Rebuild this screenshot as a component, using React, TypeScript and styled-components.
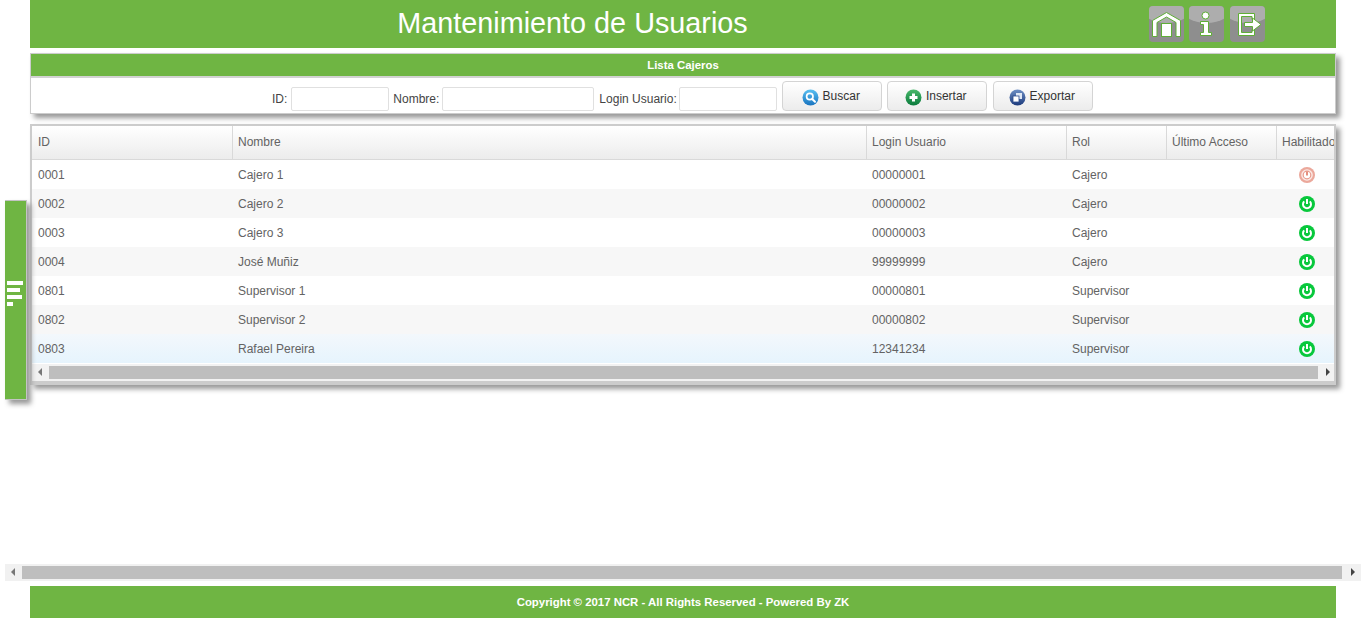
import React from 'react';
import styled, {createGlobalStyle} from 'styled-components';

const GREEN = '#6fb543';

const GlobalStyle = createGlobalStyle`
  html, body {
    margin: 0;
    padding: 0;
    background: #fff;
    overflow: hidden;
  }
  * {
    box-sizing: border-box;
  }
`;

const Page = styled.div`
  position: relative;
  width: 1366px;
  height: 618px;
  display: flex;
  flex-direction: column;
  font-family: 'Liberation Sans', Arial, sans-serif;
  font-size: 12px;
  color: #636363;
`;

const Content = styled.main`
  flex: 1;
  padding: 0 30px;
`;

const Header = styled.header`
  height: 48px;
  background: ${GREEN};
  display: flex;
  align-items: center;
`;

const Title = styled.h1`
  width: 1085px;
  margin: 0 0 2px;
  font-size: 28.8px;
  font-weight: normal;
  text-align: center;
  color: #fff;
`;

const HeaderTools = styled.div`
  display: flex;
  margin-left: 34px;
`;

const ToolButton = styled.a<{$gap?: number}>`
  width: 35px;
  height: 36px;
  margin-left: ${props => props.$gap || 0}px;
  border-radius: 4px;
  background: #8e8e8e;
  position: relative;
  overflow: hidden;
  display: block;

  &::before {
    content: '';
    position: absolute;
    left: -8px;
    right: -8px;
    top: -14px;
    height: 31px;
    border-radius: 50%;
    background: #adadad;
  }

  svg {
    position: absolute;
    left: 0;
    top: 0;
  }
`;

const Panel = styled.section`
  margin-top: 5px;
  height: 61px;
  border: 1px solid #ccc;
  box-shadow: 4px 4px 5px #999;
  background: #fff;
`;

const PanelTitle = styled.div`
  height: 22px;
  background: ${GREEN};
  color: #fff;
  font-size: 11.4px;
  font-weight: bold;
  text-align: center;
  line-height: 22px;
`;

const SearchRow = styled.form`
  height: 37px;
  border-top: 2px solid #d2d2d2;
  margin: 0;
  padding: 3px 0 2px 241px;
  display: flex;
  align-items: flex-end;
`;

const FieldLabel = styled.label<{$before?: number; $after: number}>`
  color: #444;
  margin-left: ${props => props.$before || 0}px;
  margin-right: ${props => props.$after}px;
  line-height: 24px;
`;

const FieldInput = styled.input<{$width: number}>`
  width: ${props => props.$width}px;
  height: 24px;
  border: 1px solid #e0e0e0;
  border-radius: 2px;
  background: #fff;
  padding: 0 4px;
  outline: none;
`;

const ActionButton = styled.button<{$gap: number}>`
  width: 100px;
  height: 30px;
  margin-left: ${props => props.$gap}px;
  border: 1px solid #d4d4d4;
  border-radius: 4px;
  background: linear-gradient(#fff, #ececec);
  color: #333;
  font-family: inherit;
  font-size: 12px;
  display: flex;
  align-items: center;
  justify-content: center;
  gap: 4px;
  padding: 0 2px 1px 0;

  svg {
    flex: none;
    margin-top: 3px;
  }
`;

const GridBox = styled.section`
  margin-top: 10px;
  height: 261px;
  border: 2px solid #ccc;
  border-bottom-width: 4px;
  box-shadow: 4px 4px 5px #999;
  background: #fff;
  overflow: hidden;
`;

const Table = styled.table`
  width: 1304px;
  table-layout: fixed;
  border-collapse: separate;
  border-spacing: 0;
`;

const HeadCell = styled.th`
  height: 34px;
  padding: 0 0 2px 5px;
  font-weight: normal;
  text-align: left;
  white-space: nowrap;
  overflow: hidden;
  color: #636363;
  background: linear-gradient(#fff, #ececec);
  border-right: 1px solid #d9d9d9;
  border-bottom: 1px solid #d9d9d9;

  &:first-child {
    padding-left: 6px;
  }

  &:last-child {
    border-right: 0;
  }
`;

const Row = styled.tr<{$striped?: boolean; $hover?: boolean}>`
  height: 29px;
  background: ${props =>
    props.$hover
      ? 'linear-gradient(#f3f8fc, #e6f4fd)'
      : props.$striped
        ? '#f7f7f7'
        : '#fff'};
`;

const Cell = styled.td`
  padding: 0 0 0 5px;
  white-space: nowrap;
  color: #636363;

  &:first-child {
    padding-left: 6px;
  }
`;

const StatusCell = styled.td`
  padding: 0;
  text-align: center;
  line-height: 0;

  svg {
    margin-left: 1px;
  }
`;

const ScrollBar = styled.div`
  height: 17px;
  background: #f1f1f1;
  display: flex;
  align-items: center;
`;

const InnerScrollBar = styled(ScrollBar)`
  width: 1304px;
  margin-top: 1px;
  background: #f2f2f2;
`;

const PageScrollBar = styled(ScrollBar)`
  margin: 0 5px;
  width: 1356px;
`;

const ScrollArrow = styled.span<{$side: 'left' | 'right'}>`
  flex: none;
  width: 17px;
  height: 17px;
  position: relative;

  &::after {
    content: '';
    position: absolute;
    top: 4px;
    ${props => (props.$side === 'left' ? 'left: 6px;' : 'left: 7px;')}
    border-top: 4px solid transparent;
    border-bottom: 4px solid transparent;
    ${props =>
      props.$side === 'left' ? 'border-right: 4px solid #777;' : 'border-left: 4px solid #444;'}
  }
`;

const ScrollThumb = styled.span<{$endGap: number}>`
  flex: 1;
  height: 13px;
  margin-right: ${props => props.$endGap}px;
  background: #bebebe;
`;

const Footer = styled.footer`
  height: 32px;
  margin: 5px 30px 0;
  background: ${GREEN};
  color: #fff;
  font-size: 11.4px;
  font-weight: bold;
  text-align: center;
  line-height: 32px;
`;

const SideTab = styled.aside`
  position: absolute;
  left: 5px;
  top: 200px;
  width: 22px;
  height: 200px;
  background: ${GREEN};
  border: 1px solid #c4c4c4;
  border-left: 0;
  box-shadow: 4px 4px 5px #999;
  display: flex;
  flex-direction: column;
  justify-content: center;
  gap: 3px;
  padding: 0 0 13px 2px;
`;

const TabBar = styled.span<{$width: number}>`
  display: block;
  height: 4px;
  width: ${props => props.$width}px;
  background: #fff;
`;

function HomeIcon() {
  return (
    <svg width="35" height="36" viewBox="0 0 35 36" fill="none">
      <path
        d="M3.5 14.5 L17.5 6.5 L31.5 14.5 V30.5 H27 V16.5 L17.5 11 L8 16.5 V30.5 H3.5 Z"
        fill="#fff"
        stroke="#5fae37"
        strokeWidth="1"
      />
      <rect x="12.5" y="17.5" width="10" height="13" fill="#fff" stroke="#5fae37" />
    </svg>
  );
}

function InfoIcon() {
  return (
    <svg width="35" height="36" viewBox="0 0 35 36" fill="none">
      <circle cx="16.5" cy="9.5" r="3.5" fill="#fff" stroke="#5fae37" />
      <path
        d="M11.5 15.5 H19.5 V26.5 H22.5 V29.5 H11.5 V26.5 H14.5 V18.5 H11.5 Z"
        fill="#fff"
        stroke="#5fae37"
      />
    </svg>
  );
}

function ExitIcon() {
  return (
    <svg width="35" height="36" viewBox="0 0 35 36" fill="none">
      <path
        d="M8.5 7.5 H24.5 V13.5 H22 V10.5 H11.5 V26.5 H22 V23.5 H24.5 V29.5 H8.5 Z"
        fill="#fff"
        stroke="#5fae37"
      />
      <path
        d="M14.5 16.5 H22.5 V12 L31 18.5 L22.5 25 V20.5 H14.5 Z"
        fill="#fff"
        stroke="#5fae37"
      />
    </svg>
  );
}

function SearchIcon() {
  return (
    <svg width="17" height="17" viewBox="0 0 17 17">
      <defs>
        <linearGradient id="searchFill" x1="0" y1="0" x2="0" y2="1">
          <stop offset="0" stopColor="#59c0f2" />
          <stop offset="1" stopColor="#1873bf" />
        </linearGradient>
      </defs>
      <circle cx="8.5" cy="8.5" r="8" fill="url(#searchFill)" />
      <circle cx="7.8" cy="7.5" r="3.2" fill="none" stroke="#fff" strokeWidth="1.7" />
      <path d="M10.2 10 L13 12.8" stroke="#fff" strokeWidth="2" strokeLinecap="round" />
    </svg>
  );
}

function PlusIcon() {
  return (
    <svg width="17" height="17" viewBox="0 0 17 17">
      <defs>
        <linearGradient id="plusFill" x1="0" y1="0" x2="0" y2="1">
          <stop offset="0" stopColor="#49b96b" />
          <stop offset="1" stopColor="#0a7a3c" />
        </linearGradient>
      </defs>
      <circle cx="8.5" cy="8.5" r="8" fill="url(#plusFill)" />
      <path d="M8.5 4.5 V12.5 M4.5 8.5 H12.5" stroke="#fff" strokeWidth="3" />
    </svg>
  );
}

function ExportIcon() {
  return (
    <svg width="17" height="17" viewBox="0 0 17 17">
      <defs>
        <linearGradient id="exportFill" x1="0" y1="0" x2="0" y2="1">
          <stop offset="0" stopColor="#6d8fc4" />
          <stop offset="1" stopColor="#1c3a7c" />
        </linearGradient>
      </defs>
      <circle cx="8.5" cy="8.5" r="8" fill="url(#exportFill)" />
      <rect x="7" y="4" width="6" height="6" fill="#dfe8f5" />
      <rect x="4" y="7" width="6" height="6" fill="#fff" stroke="#2c4c8c" strokeWidth="0.8" />
    </svg>
  );
}

function PowerIcon({disabled}: {disabled?: boolean}) {
  if (disabled) {
    return (
      <svg width="16" height="16" viewBox="0 0 16 16">
        <circle cx="8" cy="8" r="8" fill="#eba89b" />
        <circle cx="8" cy="8" r="5.8" fill="#fbeae6" />
        <circle cx="8" cy="8" r="3.8" fill="#fff" stroke="#e99c8e" strokeWidth="1.2" />
        <path d="M8 4.4 V8.6" stroke="#e4907f" strokeWidth="2" />
      </svg>
    );
  }
  return (
    <svg width="16" height="16" viewBox="0 0 16 16">
      <circle cx="8" cy="8" r="8" fill="#08c83c" />
      <path d="M5.2 5.4 A4 4 0 1 0 10.8 5.4" fill="none" stroke="#fff" strokeWidth="2" />
      <path d="M8 3 V8" stroke="#fff" strokeWidth="2" />
    </svg>
  );
}

const columns = [
  {title: 'ID', width: 201},
  {title: 'Nombre', width: 634},
  {title: 'Login Usuario', width: 200},
  {title: 'Rol', width: 100},
  {title: 'Último Acceso', width: 110},
  {title: 'Habilitado', width: 59},
];

const users = [
  {id: '0001', name: 'Cajero 1', login: '00000001', role: 'Cajero', enabled: false},
  {id: '0002', name: 'Cajero 2', login: '00000002', role: 'Cajero', enabled: true},
  {id: '0003', name: 'Cajero 3', login: '00000003', role: 'Cajero', enabled: true},
  {id: '0004', name: 'José Muñiz', login: '99999999', role: 'Cajero', enabled: true},
  {id: '0801', name: 'Supervisor 1', login: '00000801', role: 'Supervisor', enabled: true},
  {id: '0802', name: 'Supervisor 2', login: '00000802', role: 'Supervisor', enabled: true},
  {id: '0803', name: 'Rafael Pereira', login: '12341234', role: 'Supervisor', enabled: true},
];

export default function App() {
  return (
    <Page>
      <GlobalStyle />
      <Content>
        <Header>
          <Title>Mantenimiento de Usuarios</Title>
          <HeaderTools>
            <ToolButton>
              <HomeIcon />
            </ToolButton>
            <ToolButton $gap={5}>
              <InfoIcon />
            </ToolButton>
            <ToolButton $gap={6}>
              <ExitIcon />
            </ToolButton>
          </HeaderTools>
        </Header>

        <Panel>
          <PanelTitle>Lista Cajeros</PanelTitle>
          <SearchRow>
            <FieldLabel $after={4}>ID:</FieldLabel>
            <FieldInput $width={98} />
            <FieldLabel $before={4} $after={3}>
              Nombre:
            </FieldLabel>
            <FieldInput $width={152} />
            <FieldLabel $before={5} $after={2}>
              Login Usuario:
            </FieldLabel>
            <FieldInput $width={98} />
            <ActionButton type="button" $gap={5}>
              <SearchIcon />
              Buscar
            </ActionButton>
            <ActionButton type="button" $gap={5}>
              <PlusIcon />
              Insertar
            </ActionButton>
            <ActionButton type="button" $gap={6}>
              <ExportIcon />
              Exportar
            </ActionButton>
          </SearchRow>
        </Panel>

        <GridBox>
          <Table>
            <colgroup>
              {columns.map(col => (
                <col key={col.title} width={col.width} />
              ))}
            </colgroup>
            <thead>
              <tr>
                {columns.map(col => (
                  <HeadCell key={col.title}>{col.title}</HeadCell>
                ))}
              </tr>
            </thead>
            <tbody>
              {users.map((user, index) => (
                <Row key={user.id} $striped={index % 2 === 1} $hover={index === 6}>
                  <Cell>{user.id}</Cell>
                  <Cell>{user.name}</Cell>
                  <Cell>{user.login}</Cell>
                  <Cell>{user.role}</Cell>
                  <Cell />
                  <StatusCell>
                    <PowerIcon disabled={!user.enabled} />
                  </StatusCell>
                </Row>
              ))}
            </tbody>
          </Table>
          <InnerScrollBar>
            <ScrollArrow $side="left" />
            <ScrollThumb $endGap={1} />
            <ScrollArrow $side="right" />
          </InnerScrollBar>
        </GridBox>
      </Content>

      <PageScrollBar>
        <ScrollArrow $side="left" />
        <ScrollThumb $endGap={2} />
        <ScrollArrow $side="right" />
      </PageScrollBar>
      <Footer>Copyright © 2017 NCR - All Rights Reserved - Powered By ZK</Footer>

      <SideTab>
        <TabBar $width={16} />
        <TabBar $width={13} />
        <TabBar $width={15} />
        <TabBar $width={6} />
      </SideTab>
    </Page>
  );
}
